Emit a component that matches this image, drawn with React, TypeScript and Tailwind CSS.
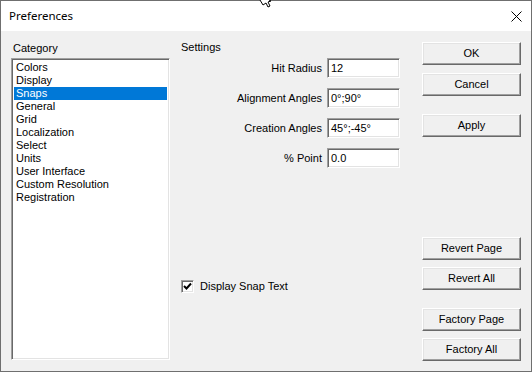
import React from "react";

const font = { fontFamily: '"Liberation Sans", Arial, sans-serif' };

function Btn({ label, className = "" }: { label: string; className?: string }) {
  return (
    <div
      className={
        "h-[23px] w-[99px] flex items-center justify-center bg-[#f0f0f0] text-[11px] text-black border border-t-white border-l-white border-r-[#696969] border-b-[#696969] shadow-[inset_-1px_-1px_0_#a0a0a0,inset_1px_1px_0_#e3e3e3] " +
        className
      }
    >
      {label}
    </div>
  );
}

function Field({ label, value, className = "" }: { label: string; value: string; className?: string }) {
  return (
    <div className={"flex items-center h-[20px] " + className}>
      <div className="w-[146px] text-right text-[11px] pr-[5px]">{label}</div>
      <div className="w-[73px] h-[20px] bg-white border border-t-[#a0a0a0] border-l-[#a0a0a0] border-r-white border-b-white shadow-[inset_1px_1px_0_#696969,inset_-1px_-1px_0_#e3e3e3] flex items-center pl-[3px] text-[11px]">
        {value}
      </div>
    </div>
  );
}

const items = [
  "Colors",
  "Display",
  "Snaps",
  "General",
  "Grid",
  "Localization",
  "Select",
  "Units",
  "User Interface",
  "Custom Resolution",
  "Registration",
];

export default function App() {
  return (
    <div className="relative w-[532px] h-[372px] border border-[#6f6f6f] flex flex-col bg-[#f0f0f0]" style={font}>
      <div className="h-[30px] bg-white flex items-center justify-between pl-[8px] pr-[9px]">
        <span className="text-[11.5px] text-black" style={{ fontFamily: '"Noto Sans", "Liberation Sans", sans-serif' }}>
          Preferences
        </span>
        <svg width="11" height="11" viewBox="0 0 11 11">
          <path d="M0.5 0.5 L10.5 10.5 M10.5 0.5 L0.5 10.5" stroke="#000" strokeWidth="1" />
        </svg>
      </div>
      <svg className="absolute left-[257px] top-[-1px]" width="14" height="8" viewBox="0 0 14 8">
        <path d="M2 0 L5 5 L8 3 L10 7 L12 6 L10 2 L13 1 L11 0" fill="white" stroke="#000" strokeWidth="1" />
      </svg>
      <div className="flex-1 flex flex-row pl-[10px] text-[11px] text-black">
        <div className="flex flex-col w-[159px]">
          <div className="mt-[11px] h-[12px] leading-[12px] pl-[2px]">Category</div>
          <div className="mt-[4px] h-[302px] bg-white border border-t-[#a0a0a0] border-l-[#a0a0a0] border-r-white border-b-white shadow-[inset_1px_1px_0_#696969,inset_-1px_-1px_0_#e3e3e3] pt-[2px] pl-[2px] pr-[2px]">
            {items.map((it) => (
              <div
                key={it}
                className={
                  "h-[13px] leading-[13px] pl-[2px] " + (it === "Snaps" ? "bg-[#0078d7] text-white" : "")
                }
              >
                {it}
              </div>
            ))}
          </div>
        </div>
        <div className="flex flex-col ml-[11px] w-[224px]">
          <div className="mt-[10px] h-[12px] leading-[12px]">Settings</div>
          <Field label="Hit Radius" value="12" className="mt-[5px]" />
          <Field label="Alignment Angles" value="0°;90°" className="mt-[10px]" />
          <Field label="Creation Angles" value="45°;-45°" className="mt-[10px]" />
          <Field label="% Point" value="0.0" className="mt-[10px]" />
          <div className="mt-[110px] flex items-center">
            <div className="w-[13px] h-[13px] bg-white border border-t-[#a0a0a0] border-l-[#a0a0a0] border-r-white border-b-white shadow-[inset_1px_1px_0_#696969,inset_-1px_-1px_0_#e3e3e3] flex items-center justify-center">
              <svg width="9" height="9" viewBox="0 0 9 9">
                <path d="M1 4 L3.5 6.5 L8 1.5" stroke="#000" strokeWidth="2" fill="none" />
              </svg>
            </div>
            <span className="ml-[6px]">Display Snap Text</span>
          </div>
        </div>
        <div className="flex flex-col ml-[17px]">
          <Btn label="OK" className="mt-[11px]" />
          <Btn label="Cancel" className="mt-[8px]" />
          <Btn label="Apply" className="mt-[18px]" />
          <Btn label="Revert Page" className="mt-[100px]" />
          <Btn label="Revert All" className="mt-[7px]" />
          <Btn label="Factory Page" className="mt-[18px]" />
          <Btn label="Factory All" className="mt-[7px]" />
        </div>
      </div>
    </div>
  );
}
